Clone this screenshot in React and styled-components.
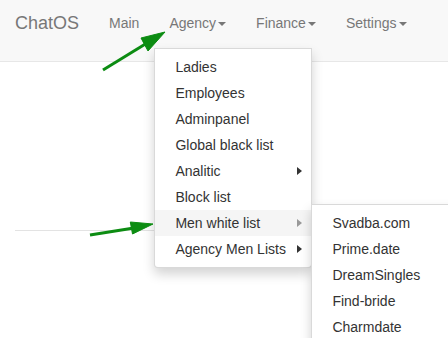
import React from "react";
import styled, { createGlobalStyle } from "styled-components";

const Global = createGlobalStyle`
  html, body { margin: 0; padding: 0; overflow: hidden; background: #fff; }
  body { font-family: "Liberation Sans", Arial, sans-serif; font-size: 14px; color: #333; }
  * { box-sizing: border-box; }
`;

const Page = styled.div`
  position: relative;
  width: 448px;
  height: 338px;
  overflow: hidden;
`;

const Navbar = styled.nav`
  height: 62px;
  background: #f8f8f8;
  border-bottom: 1px solid #e7e7e7;
  display: flex;
  align-items: flex-start;
  position: relative;
  z-index: 2;
`;

const Brand = styled.a`
  font-size: 18px;
  line-height: 20px;
  padding: 13px 15px 15px 15px;
  color: #777;
  text-decoration: none;
`;

const NavList = styled.ul`
  list-style: none;
  margin: 0;
  padding: 0;
  display: flex;
`;

const NavItem = styled.li`
  position: relative;
`;

const NavLink = styled.a`
  display: block;
  padding: 13px 15px 15px 15px;
  line-height: 20px;
  color: #777;
  text-decoration: none;
  white-space: nowrap;
`;

const Caret = styled.span`
  display: inline-block;
  width: 0;
  height: 0;
  margin-left: 2px;
  vertical-align: middle;
  border-top: 4px solid #777;
  border-left: 4px solid transparent;
  border-right: 4px solid transparent;
`;

const Menu = styled.ul`
  position: absolute;
  top: ${(p) => p.$top};
  left: ${(p) => p.$left};
  min-width: 158px;
  width: ${(p) => p.$width || "158px"};
  list-style: none;
  margin: 0;
  padding: 5px 0;
  background: #fff;
  border: 1px solid rgba(0, 0, 0, 0.15);
  border-radius: ${(p) => p.$radius || "0 0 4px 4px"};
  box-shadow: 0 6px 12px rgba(0, 0, 0, 0.175);
  z-index: 3;
`;

const MenuItem = styled.li`
  position: relative;
`;

const MenuLink = styled.a`
  display: block;
  padding: 3px 20px;
  line-height: 20px;
  color: #333;
  white-space: nowrap;
  text-decoration: none;
  background: ${(p) => (p.$active ? "#f5f5f5" : "transparent")};
`;

const SubArrow = styled.span`
  position: absolute;
  right: 9px;
  top: 9px;
  width: 0;
  height: 0;
  border-top: 4px solid transparent;
  border-bottom: 4px solid transparent;
  border-left: 5px solid ${(p) => p.$color || "#333"};
`;

const Content = styled.div`
  padding: 0 0 0 15px;
`;

const Rule = styled.div`
  margin-top: 168px;
  width: 140px;
  border-top: 1px solid #e3e3e3;
`;

const Annotations = styled.svg`
  position: absolute;
  left: 0;
  top: 0;
  z-index: 5;
  pointer-events: none;
`;

const agencyItems = [
  { t: "Ladies" },
  { t: "Employees" },
  { t: "Adminpanel" },
  { t: "Global black list" },
  { t: "Analitic", sub: true, color: "#333" },
  { t: "Block list" },
  { t: "Men white list", sub: true, color: "#999", active: true, open: true },
  { t: "Agency Men Lists", sub: true, color: "#333" },
];

const whiteList = ["Svadba.com", "Prime.date", "DreamSingles", "Find-bride", "Charmdate"];

export default function App() {
  return (
    <Page>
      <Global />
      <Navbar>
        <Brand>ChatOS</Brand>
        <NavList>
          <NavItem>
            <NavLink>Main</NavLink>
          </NavItem>
          <NavItem>
            <NavLink>
              Agency<Caret />
            </NavLink>
            <Menu $top="48px" $left="0px">
              {agencyItems.map((it) => (
                <MenuItem key={it.t}>
                  <MenuLink $active={it.active}>{it.t}</MenuLink>
                  {it.sub && <SubArrow $color={it.color} />}
                  {it.open && (
                    <Menu $top="-6px" $left="100%" $width="160px" $radius="0 4px 4px 0">
                      {whiteList.map((w) => (
                        <MenuItem key={w}>
                          <MenuLink>{w}</MenuLink>
                        </MenuItem>
                      ))}
                    </Menu>
                  )}
                </MenuItem>
              ))}
            </Menu>
          </NavItem>
          <NavItem>
            <NavLink>
              Finance<Caret />
            </NavLink>
          </NavItem>
          <NavItem>
            <NavLink>
              Settings<Caret />
            </NavLink>
          </NavItem>
        </NavList>
      </Navbar>
      <Content>
        <Rule />
      </Content>
      <Annotations width="448" height="338" viewBox="0 0 448 338">
        <g fill="#0c8c12" stroke="#0c8c12">
          <line x1="103" y1="70" x2="147" y2="43" strokeWidth="3" />
          <polygon points="165,32 148,51 141,38" strokeWidth="1" />
          <line x1="90" y1="235" x2="134" y2="228" strokeWidth="3" />
          <polygon points="153,224 132.5,234 130.3,222" strokeWidth="1" />
        </g>
      </Annotations>
    </Page>
  );
}
